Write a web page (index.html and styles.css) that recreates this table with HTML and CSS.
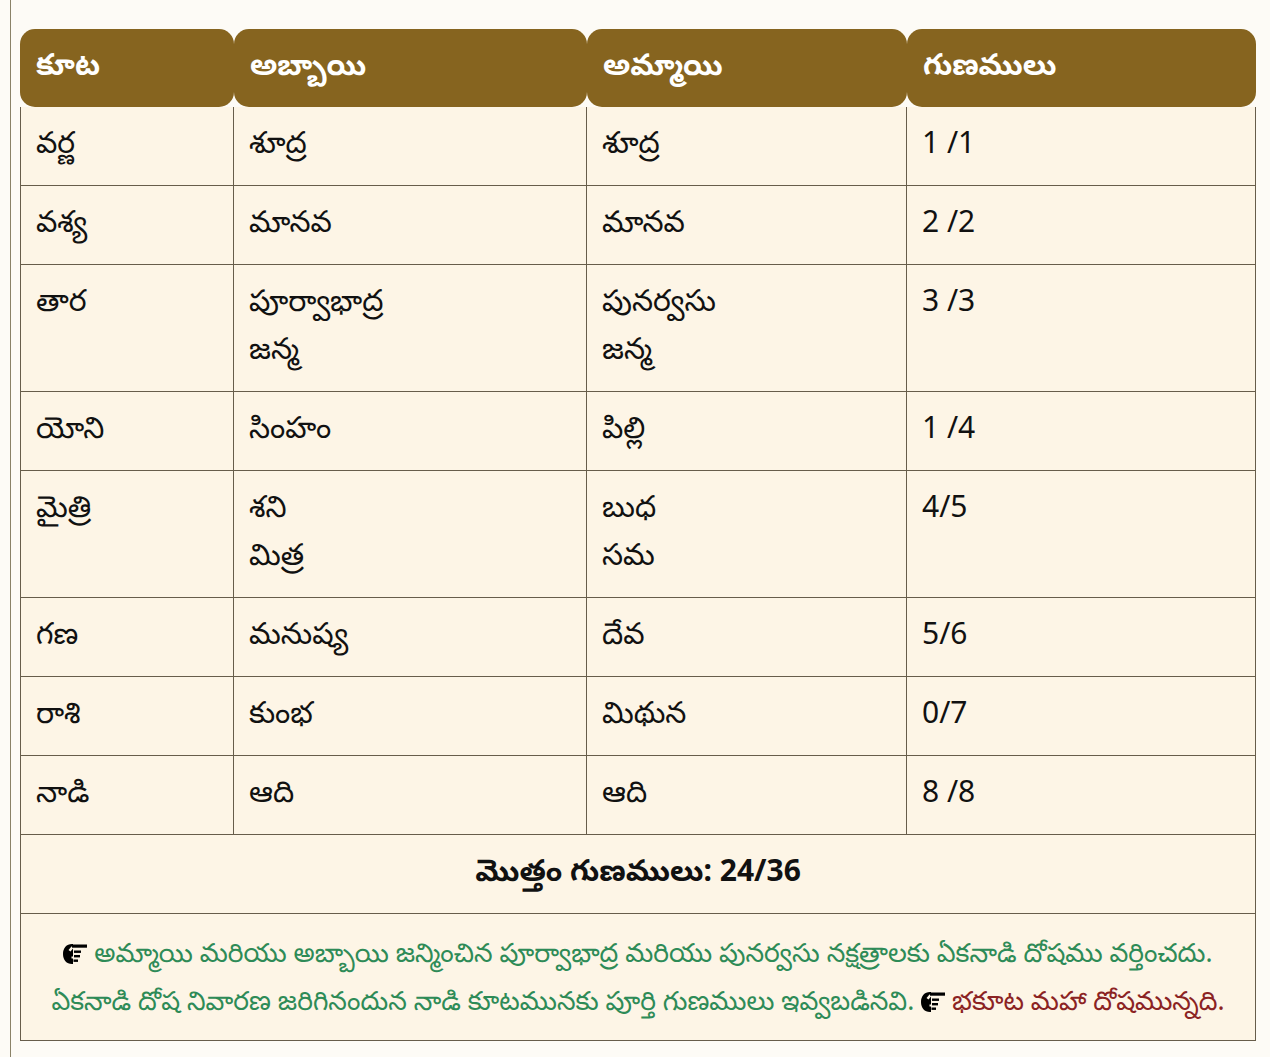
FILE: index.html
```html
<!DOCTYPE html>
<html lang="te">
<head>
<meta charset="utf-8">
<title>గుణ మేళనం</title>
<link rel="stylesheet" href="styles.css">
</head>
<body>
<div class="page">
  <div class="frame">
    <table class="match">
      <colgroup>
        <col class="c1"><col class="c2"><col class="c3"><col class="c4">
      </colgroup>
      <thead>
        <tr>
          <th>కూట</th>
          <th>అబ్బాయి</th>
          <th>అమ్మాయి</th>
          <th>గుణములు</th>
        </tr>
      </thead>
      <tbody>
        <tr><td>వర్ణ</td><td>శూద్ర</td><td>శూద్ర</td><td>1 /1</td></tr>
        <tr><td>వశ్య</td><td>మానవ</td><td>మానవ</td><td>2 /2</td></tr>
        <tr><td>తార</td><td>పూర్వాభాద్ర<br>జన్మ</td><td>పునర్వసు<br>జన్మ</td><td>3 /3</td></tr>
        <tr><td>యోని</td><td>సింహం</td><td>పిల్లి</td><td>1 /4</td></tr>
        <tr><td>మైత్రి</td><td>శని<br>మిత్ర</td><td>బుధ<br>సమ</td><td>4/5</td></tr>
        <tr><td>గణ</td><td>మనుష్య</td><td>దేవ</td><td>5/6</td></tr>
        <tr><td>రాశి</td><td>కుంభ</td><td>మిథున</td><td>0/7</td></tr>
        <tr><td>నాడి</td><td>ఆది</td><td>ఆది</td><td>8 /8</td></tr>
        <tr><td colspan="4" class="total">మొత్తం గుణములు: 24/36</td></tr>
        <tr>
          <td colspan="4" class="note">
            <svg class="hand" viewBox="0 0 24 22" aria-hidden="true"><path d="M9 1C3.5 1 0 5 0 11s3.5 10 9 10h1v-5.5H8.5v-2H10V5.5L7.5 8.5 5.5 7l3-3.5H10V1z"/><rect x="9" y="1.5" width="15" height="3.2"/><rect x="11" y="7.5" width="7" height="2.4"/><rect x="11" y="12" width="6" height="2.4"/><rect x="10.5" y="16.5" width="4.5" height="2.4"/></svg> <span class="good">అమ్మాయి మరియు అబ్బాయి జన్మించిన పూర్వాభాద్ర మరియు పునర్వసు నక్షత్రాలకు ఏకనాడి దోషము వర్తించదు.<br>ఏకనాడి దోష నివారణ జరిగినందున నాడి కూటమునకు పూర్తి గుణములు ఇవ్వబడినవి.</span> <svg class="hand" viewBox="0 0 24 22" aria-hidden="true"><path d="M9 1C3.5 1 0 5 0 11s3.5 10 9 10h1v-5.5H8.5v-2H10V5.5L7.5 8.5 5.5 7l3-3.5H10V1z"/><rect x="9" y="1.5" width="15" height="3.2"/><rect x="11" y="7.5" width="7" height="2.4"/><rect x="11" y="12" width="6" height="2.4"/><rect x="10.5" y="16.5" width="4.5" height="2.4"/></svg> <span class="bad">భకూట మహా దోషమున్నది.</span>
          </td>
        </tr>
      </tbody>
    </table>
  </div>
</div>
</body>
</html>
```

FILE: styles.css
```css
html, body {
  margin: 0;
  padding: 0;
  background: #fdfbf6;
}

body {
  font-family: "Noto Sans", "Noto Sans Telugu", "DejaVu Sans", sans-serif;
  color: #111;
}

.page {
  padding-left: 10px;
  min-height: 1057px;
}

.frame {
  border-left: 1px solid #8a8268;
  padding: 29px 0 20px 9px;
  min-height: 1000px;
}

.match {
  width: 1236px;
  table-layout: fixed;
  border-collapse: separate;
  border-spacing: 0;
  font-size: 30px;
  line-height: 48px;
}

.c1 { width: 214px; }
.c2 { width: 353px; }
.c3 { width: 320px; }
.c4 { width: 349px; }

.match th {
  background: #86641f;
  color: #fff;
  font-weight: 700;
  text-align: left;
  padding: 11px 16px 19px;
  border-radius: 15px;
  height: 48px;
}

.match td {
  background: #fdf5e6;
  text-align: left;
  vertical-align: top;
  padding: 11px 15px 19px;
  border-right: 1px solid #675d4b;
  border-bottom: 1px solid #675d4b;
}

.match td:first-child {
  border-left: 1px solid #675d4b;
}

.match td.total {
  text-align: center;
  font-weight: 700;
}

.match td.note {
  text-align: center;
  font-size: 26.5px;
  padding: 14px 10px 16px;
}

.hand {
  width: 24px;
  height: 22px;
  vertical-align: -3px;
  fill: #000;
}

.good { color: #2e8b57; }
.bad { color: #8b2323; }
```
